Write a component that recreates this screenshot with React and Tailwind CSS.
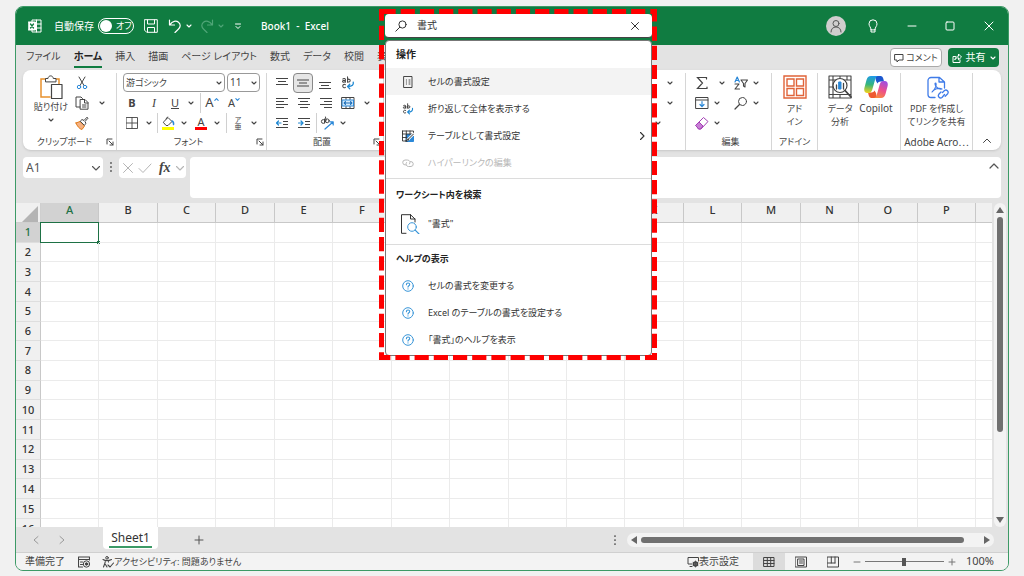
/**
 * Excel window with the search box open
 * -------------------------------------------------
 * - Title bar, ribbon, formula bar, sheet and status bar
 * - Search results for 書式, framed by a red dashed marker
 */

const columns = ["A", "B", "C", "D", "E", "F", "G", "H", "I", "J", "K", "L", "M", "N", "O", "P"];
const rows = Array.from({ length: 15 }, (_, i) => i + 1);
const tabs = ["ファイル", "ホーム", "挿入", "描画", "ページ レイアウト", "数式", "データ", "校閲", "表示"];

/* ---------- Small shared pieces ---------- */

function Icon({ className = "size-4", box = 16, children }) {
  return (
    <svg
      className={`shrink-0 ${className}`}
      viewBox={`0 0 ${box} ${box}`}
      fill="none"
      stroke="currentColor"
      strokeLinecap="round"
      strokeLinejoin="round"
      aria-hidden="true"
    >
      {children}
    </svg>
  );
}

function Chevron({ className = "size-[6px]" }) {
  return (
    <Icon box={6} className={className}>
      <path d="M1 2l2 2 2-2" strokeWidth="1.1" />
    </Icon>
  );
}

// Larger, thin chevron of the formula bar
function BarChevron() {
  return (
    <Icon box={10} className="size-2.5">
      <path d="M1.500 3.500L5 7l3.500-3.500" strokeWidth="1.100" />
    </Icon>
  );
}

function Cell({ label, className = "w-[22px]", children }) {
  return (
    <button type="button" aria-label={label} className={`flex h-5 shrink-0 items-center justify-center ${className}`}>
      {children}
    </button>
  );
}

function More({ className = "w-3" }) {
  return (
    <Cell label="その他" className={className}>
      <Chevron />
    </Cell>
  );
}

function Bar({ className = "w-1.5" }) {
  return (
    <span className={`flex h-5 shrink-0 justify-center ${className}`}>
      <span className="w-px bg-[#d0d0d0]" />
    </span>
  );
}

function Group({ label, className, launcher, children }) {
  return (
    <section className={`flex shrink-0 flex-col border-r border-[#d6d6d6] ${className}`}>
      <div className="h-[60px]">{children}</div>
      <div className="flex h-[17px] items-center">
        <h2 className="flex-1 text-center text-[9px] whitespace-nowrap">{label}</h2>
        {launcher && (
          <button type="button" aria-label="詳細" className="mr-0.5">
            <Icon box={8} className="size-2">
              <path d="M1 6V1h5M3 3l4 4M7 4v3H4" />
            </Icon>
          </button>
        )}
      </div>
    </section>
  );
}

function Combo({ label, value, className }) {
  return (
    <div className={`flex h-[19px] items-center rounded border border-[#999] pr-0.5 pl-0.5 ${className}`}>
      <select aria-label={label} defaultValue={value} className="min-w-0 flex-1 appearance-none bg-transparent outline-none">
        <option>{value}</option>
      </select>
      <Chevron />
    </div>
  );
}

/* ---------- Icons used more than once ---------- */

function WrapIcon({ className = "size-3.5" }) {
  return (
    <Icon className={className}>
      <path d="M2 3.500c1-1 3-.6 3 .6V7M5 5c-2 0-3.200.3-3.200 1.300S4 7.400 5 6M7.500 1v6M7.500 4.500c.6-1.300 3-1.300 3 .6S8 7.500 7.500 6.200M5 10c-1.200-1-3-.3-3 1.500s1.800 2.500 3 1.500" strokeWidth="1.200" />
      <path d="M14 7c.6 3-1 5-6 5M10 9.500L7.500 12l2.500 2.500" stroke="#1e88d2" strokeWidth="1.500" />
    </Icon>
  );
}

function HelpIcon() {
  return (
    <Icon className="size-3" box={12}>
      <circle cx="6" cy="6" r="5.300" stroke="#3a96d8" />
      <path d="M4.400 4.700c0-2.200 3.300-2.100 3.300-.2C7.700 5.800 6 5.700 6 7.100M6 8.800v.1" stroke="#3a96d8" strokeWidth="1.100" />
    </Icon>
  );
}

function Lines({ d }) {
  return (
    <Icon className="size-3.5" box={14}>
      <path d={d} strokeLinecap="butt" />
    </Icon>
  );
}

function IndentIcon({ arrow }) {
  return (
    <Icon className="size-3.5" box={14}>
      <path d="M1 2.500h12M8 5.500h5M8 8.500h5M1 11.500h12" strokeLinecap="butt" />
      <path d={arrow} stroke="#1e88d2" strokeWidth="1.200" />
    </Icon>
  );
}

/* ---------- Search box and its results ---------- */

const actions = [
  {
    text: "セルの書式設定",
    active: true,
    icon: (
      <Icon className="size-3" box={12}>
        <path d="M2 .5h8v11H2z" strokeWidth=".9" />
        <path d="M4.300 4h.3M7 4h1M4.300 6h.3M7 6h1M4.300 8h.3M7 8h1" strokeWidth=".9" />
      </Icon>
    ),
  },
  { text: "折り返して全体を表示する", icon: <WrapIcon className="size-3" /> },
  {
    text: "テーブルとして書式設定",
    sub: true,
    icon: (
      <Icon className="size-3" box={12}>
        <path d="M4.500 4.500h7v7h-7z" fill="#2b88d8" stroke="#2b88d8" />
        <path d="M.5 1h11v3H.500zM.500 1v10h3M.500 7.500h4M4.300 1v10M8 1v3" strokeWidth=".9" />
        <path d="M11.500 4L6 9.500" stroke="#fff" strokeWidth="2.500" />
        <path d="M11.500 4L6.500 9M6 9c-1.500 0-1 2-2.500 2 1.500.6 3 .3 3-1.500" />
      </Icon>
    ),
  },
  {
    text: "ハイパーリンクの編集",
    disabled: true,
    icon: (
      <Icon className="size-3" box={12}>
        <path d="M3.500 8A2.500 2.500 0 013 3h2.500a2.500 2.500 0 012 4M8.500 4.500a2.500 2.500 0 01.5 5H6.500a2.500 2.500 0 01-2-4" />
      </Icon>
    ),
  },
];

const helps = ["セルの書式を変更する", "Excel のテーブルの書式を設定する", "「書式」のヘルプを表示"];

function SearchBox() {
  return (
    <div className="relative z-10 min-w-0 flex-1">
      <div className="flex h-6 items-center rounded-sm border-b border-[#444] bg-white pr-3 pl-2.5 text-[#333]">
        <Icon className="size-3" box={12}>
          <circle cx="7.500" cy="4.500" r="3.600" />
          <path d="M4.800 7.200L.8 11.200" />
        </Icon>
        <input
          type="text"
          aria-label="検索"
          defaultValue="書式"
          className="min-w-0 flex-1 bg-transparent pl-2.5 text-[10px] outline-none"
        />
        <button type="button" aria-label="クリア">
          <Icon className="size-2.5" box={10}>
            <path d="M1.500 1.500l7 7M8.500 1.500l-7 7" />
          </Icon>
        </button>
      </div>

      <div className="absolute inset-x-0 top-full mt-0.5 rounded-sm border border-[#777] bg-white pb-0.5 text-[9px] text-[#333]">
        <section className="border-b border-[#dcdcdc] pb-0.5">
          <h2 className="flex h-[27px] items-center pl-2.5 text-[10px] font-bold text-[#222]">操作</h2>
          {actions.map((a) => (
            <button
              key={a.text}
              type="button"
              disabled={a.disabled}
              className={`flex h-[27px] w-full items-center pr-1 ${a.active ? "bg-[#f3f3f3]" : ""} ${a.disabled ? "text-[#b8b8b8]" : ""}`}
            >
              <span className="flex w-11 shrink-0 justify-center">{a.icon}</span>
              <span className="-ml-0.5 flex-1 text-left">{a.text}</span>
              {a.sub && (
                <Icon className="size-2.5" box={10}>
                  <path d="M3.500 1.500L7 5 3.500 8.500" strokeWidth="1.100" />
                </Icon>
              )}
            </button>
          ))}
        </section>

        <section className="border-b border-[#dcdcdc] pt-0.5 pb-1">
          <h2 className="flex h-[27px] items-center pl-2.5 font-bold text-[#222]">ワークシート内を検索</h2>
          <button type="button" className="flex h-8 w-full items-center">
            <span className="flex w-12 shrink-0 justify-center">
              <Icon className="size-5" box={20}>
                <path d="M6 19.300H1.500V.7h9L15 5v3M10.500.7V5H15" strokeLinejoin="miter" />
                <circle cx="12" cy="13" r="4.300" stroke="#3a96d8" />
                <path d="M15.200 16.200L19 20" stroke="#3a96d8" strokeWidth="1.200" />
              </Icon>
            </span>
            <span className="-ml-1.5">"書式"</span>
          </button>
        </section>

        <section>
          <h2 className="flex h-[27px] items-center pl-2.5 font-bold text-[#222]">ヘルプの表示</h2>
          {helps.map((h) => (
            <button key={h} type="button" className="flex h-[27px] w-full items-center">
              <span className="flex w-11 shrink-0 justify-center">
                <HelpIcon />
              </span>
              <span className="-ml-0.5">{h}</span>
            </button>
          ))}
        </section>
      </div>

      {/* Red marker around the box and its results */}
      <svg
        className="pointer-events-none absolute -top-[5px] -left-[6px] h-[351px] w-[calc(100%+11px)] overflow-visible"
        aria-hidden="true"
      >
        <rect x="2.500" y="2.500" width="98.200%" height="98.600%" fill="none" stroke="#fe0000" strokeWidth="5" strokeDasharray="14.200 5" />
      </svg>
    </div>
  );
}

/* ---------- Title bar ---------- */

function TitleBar() {
  return (
    <header className="flex h-[38px] shrink-0 items-center bg-[#107c41] text-white">
      <div className="flex w-[369px] shrink-0 items-center pl-3">
        <Icon className="size-3.5" box={14}>
          <path d="M4 3V1h9v12H4v-2M8.500 1v12M8.500 5H13M8.500 9H13" />
          <path d="M.5 3h7v8h-7z" fill="#fff" />
          <path d="M2.500 5l3 4M5.500 5l-3 4" stroke="#107c41" strokeWidth="1.300" />
        </Icon>
        <label className="ml-3 flex items-center text-[10px]">
          <span className="w-11">自動保存</span>
          <input type="checkbox" className="peer sr-only" />
          <span className="flex h-4 w-9 items-center gap-1 rounded-full border border-white pl-px text-[9px]">
            <span className="size-3 rounded-full bg-white" />
            オフ
          </span>
        </label>
        <button type="button" aria-label="保存" className="ml-2.5">
          <Icon className="size-3.5" box={14}>
            <path d="M.7.7h12.600v12.600H2.700l-2-2zM3.500 1v4h7V1M3.500 13V8.500h7V13" strokeLinejoin="miter" />
          </Icon>
        </button>
        <button type="button" aria-label="元に戻す" className="ml-2.5">
          <Icon className="size-3.5" box={14}>
            <path d="M1.500 1v5h5M1.800 5.800C4.500 2 8 1.200 10.500 3.300s2 5-.2 7L7 13.500" strokeWidth="1.200" />
          </Icon>
        </button>
        <Chevron className="ml-1 size-[6px]" />
        <button type="button" aria-label="やり直し" disabled className="ml-2 text-[#4fa577]">
          <Icon className="size-3.5" box={14}>
            <path d="M12.500 1v5h-5M12.200 5.800C9.500 2 6 1.200 3.500 3.300s-2 5 .2 7L7 13.500" strokeWidth="1.200" />
          </Icon>
        </button>
        <Chevron className="ml-1 size-[6px] text-[#4fa577]" />
        <Icon className="ml-2.5 size-2" box={8}>
          <path d="M1.500 2h5M2 4.500l2 2 2-2" />
        </Icon>
        <h1 className="ml-[19px] text-[10px] font-medium whitespace-pre">Book1  -  Excel</h1>
      </div>

      <SearchBox />

      <div className="flex w-[356px] shrink-0 items-center justify-end">
        <button type="button" aria-label="アカウント" className="flex size-5 items-center justify-center rounded-full bg-[#d0cece] text-[#555]">
          <Icon className="size-3.5" box={14}>
            <circle cx="7" cy="4.500" r="3" />
            <path d="M2 13c0-3 2-5 5-5s5 2 5 5" />
          </Icon>
        </button>
        <button type="button" aria-label="ヒント" className="flex w-[54px] justify-center">
          <Icon className="size-3.5" box={14}>
            <path d="M5 10.500C5 8 3 7.500 3 4.800a4 4 0 018 0C11 7.500 9 8 9 10.500zM5 10.500v2.500h4v-2.500" />
          </Icon>
        </button>
        <button type="button" aria-label="最小化" className="flex w-6 justify-center">
          <Icon className="size-2.5" box={10}>
            <path d="M1 5h8" />
          </Icon>
        </button>
        <button type="button" aria-label="最大化" className="flex w-[52px] justify-center">
          <Icon className="size-2.5" box={10}>
            <rect x="1" y="1" width="8" height="8" rx="1" />
          </Icon>
        </button>
        <button type="button" aria-label="閉じる" className="mr-1.5 flex w-[26px] justify-center">
          <Icon className="size-2.5" box={10}>
            <path d="M1 1l8 8M9 1L1 9" />
          </Icon>
        </button>
      </div>
    </header>
  );
}

function TabRow() {
  return (
    <nav className="flex h-[25px] shrink-0 items-center justify-between pr-[9px] pl-2.5">
      <div className="flex gap-[13px] text-[10px]">
        {tabs.map((t) => (
          <button
            key={t}
            type="button"
            className={`h-5 border-b-2 whitespace-nowrap ${t === "ホーム" ? "border-[#107c41] font-bold text-[#222]" : "border-transparent"}`}
          >
            {t}
          </button>
        ))}
      </div>
      <div className="flex gap-1.5 text-[10px]">
        <button type="button" className="flex h-[19px] w-[52px] items-center justify-center gap-0.5 rounded border border-[#aaa] bg-white text-[9px] whitespace-nowrap">
          <Icon className="size-2.5" box={10}>
            <path d="M1 1.500h8v5.500H5L3 9V7H1z" />
          </Icon>
          コメント
        </button>
        <button type="button" className="flex h-[19px] w-[51px] items-center justify-center gap-1 rounded bg-[#107c41] whitespace-nowrap text-white">
          <Icon className="size-2.5" box={10}>
            <path d="M3.500 3.500H1v6h7V7M3 6.500C3.500 4 5 3.200 6.500 3.200V1L9.500 4 6.500 6.800V4.800C5 4.800 4 5.200 3 6.500z" />
          </Icon>
          共有
          <Chevron />
        </button>
      </div>
    </nav>
  );
}

/* ---------- Ribbon ---------- */

function Ribbon() {
  return (
    <div className="mr-[7px] ml-[7px] flex h-20 shrink-0 rounded-lg bg-white pt-[3px] text-[#444] shadow-sm">
      <Group label="クリップボード" launcher className="w-[94px]">
        <div className="flex">
          <button type="button" className="ml-2 flex w-10 flex-col items-center pt-0.5 text-[9px] leading-4 whitespace-nowrap">
            <Icon className="size-6" box={24}>
              <path d="M8 4H2v18h9M15 4h5v5" stroke="#e8912d" strokeWidth="1.500" strokeLinejoin="miter" />
              <path d="M6.500 6.500v-3H9c.3-3.500 5-3.500 5.300 0H17v3z" fill="#fff" />
              <path d="M12.500 9.500h10.500v14H12.500z" fill="#fff" strokeWidth="1.200" />
            </Icon>
            貼り付け
            <Chevron className="mt-0.5 size-[6px]" />
          </button>
          <div className="flex flex-col">
            <Cell label="切り取り">
              <Icon className="size-3.5" box={14}>
                <path d="M4 1l5 8.500M10 1L5 9.500" />
                <circle cx="4" cy="11" r="1.700" stroke="#2b88d8" />
                <circle cx="10" cy="11" r="1.700" stroke="#2b88d8" />
              </Icon>
            </Cell>
            <div className="flex">
              <Cell label="コピー">
                <Icon className="size-3.5" box={14}>
                  <path d="M5 11H1V1h5l1.500 1.500M5.500 3.500h4.500L13 6.500v6.700H5.500zM9.500 3.500v3.500H13M7.500 9h3.500M7.500 11h3.500" />
                </Icon>
              </Cell>
              <More className="w-[18px]" />
            </div>
            <Cell label="書式のコピー">
              <Icon className="size-3.5" box={14}>
                <path d="M1 7l4-1.500L9.500 10 7 13.500C4.500 13 2 10 1 7z" fill="#f4b183" stroke="#e07b1a" />
                <path d="M5.500 5L7 3.500l2 1L12 1.200l1 1L10 5.500l1 2L9.500 9z" fill="#fff" />
              </Icon>
            </Cell>
          </div>
        </div>
      </Group>

      <Group label="フォント" launcher className="w-[150px] pl-1">
        <div className="flex h-5 gap-0.5 pl-0.5">
          <Combo label="フォント名" value="游ゴシック" className="w-[102px] text-[9px]" />
          <Combo label="フォント サイズ" value="11" className="w-[33px] text-[10px]" />
        </div>
        <div className="flex text-[11px]">
          <Cell label="太字"><b>B</b></Cell>
          <Cell label="斜体"><i className="font-['Liberation_Serif',serif] text-[12px]">I</i></Cell>
          <Cell label="下線" className="w-5"><u>U</u></Cell>
          <More />
          <Bar />
          <Cell label="フォント サイズの拡大" className="w-[18px] text-[13px]">
            A<Icon box={6} className="mb-2 size-[5px]"><path d="M1 4l2-2 2 2" stroke="#2b88d8" strokeWidth="1.300" /></Icon>
          </Cell>
          <Cell label="フォント サイズの縮小" className="w-[26px] text-[11px]">
            A<Icon box={6} className="mb-2 size-[5px]"><path d="M1 2l2 2 2-2" stroke="#2b88d8" strokeWidth="1.300" /></Icon>
          </Cell>
        </div>
        <div className="flex">
          <Cell label="罫線">
            <Icon className="size-3" box={12}>
              <path d="M.5.500h11v11H.500zM6 .5v11M.5 6h11" strokeWidth=".9" />
            </Icon>
          </Cell>
          <More />
          <Bar className="w-1" />
          <Cell label="塗りつぶし" className="w-[18px]">
            <Icon className="size-3.5" box={14}>
              <path d="M2.500 6L7 1.500l4 4-4 4H5.500zM5 3l1.500-2" />
              <path d="M11 5c1.500.8 1.800 2 1.500 3.500" stroke="#2b88d8" strokeWidth="1.500" />
              <path d="M1 12.500h12" stroke="#ffff00" strokeWidth="3" strokeLinecap="butt" />
            </Icon>
          </Cell>
          <More className="w-3.5" />
          <Cell label="フォントの色" className="w-5">
            <span className="flex h-3.5 items-center border-b-3 border-[#f00] px-0.5 text-[11px] leading-3">A</span>
          </Cell>
          <More />
          <Bar />
          <Cell label="ふりがな" className="w-[18px] flex-col text-[7px] leading-[7px]">
            <span>ア</span>
            <span>亜</span>
          </Cell>
          <More className="w-3.5" />
        </div>
      </Group>

      <Group label="配置" launcher className="w-[117px] pl-1">
        <div className="flex">
          <Cell label="上揃え"><Lines d="M1 2.500h12M3 5.500h8M1 8.500h12" /></Cell>
          <Cell label="上下中央揃え" className="w-5 rounded border border-[#888] bg-[#e6e6e6]">
            <Lines d="M1 4h12M3 7h8M1 10h12" />
          </Cell>
          <Cell label="下揃え" className="w-6"><Lines d="M1 6.500h12M3 9.500h8M1 12.500h12" /></Cell>
          <Cell label="折り返し"><WrapIcon /></Cell>
        </div>
        <div className="flex">
          <Cell label="左揃え"><Lines d="M1 2.500h12M1 5.500h8M1 8.500h12M1 11.500h8" /></Cell>
          <Cell label="中央揃え"><Lines d="M1 2.500h12M3 5.500h8M1 8.500h12M3 11.500h8" /></Cell>
          <Cell label="右揃え"><Lines d="M1 2.500h12M5 5.500h8M1 8.500h12M5 11.500h8" /></Cell>
          <Cell label="セルを結合">
            <Icon className="size-3.5" box={14}>
              <path d="M1 1.500h12v11H1zM5 1.500v2M9 1.500v2M5 10.500v2M9 10.500v2" />
              <path d="M1.500 4h11v6h-11z" fill="#d5eafa" stroke="#2b88d8" />
              <path d="M3.500 7h7M4.500 5.700L3.200 7l1.300 1.300M9.500 5.700L10.800 7 9.500 8.300" stroke="#1e6fb8" strokeWidth="1.200" />
            </Icon>
          </Cell>
          <More className="w-4" />
        </div>
        <div className="flex">
          <Cell label="インデント解除"><IndentIcon arrow="M6 7H1.500M3.500 5l-2 2 2 2" /></Cell>
          <Cell label="インデント"><IndentIcon arrow="M1.500 7H6M4 5l2 2-2 2" /></Cell>
          <Bar className="w-0.5" />
          <Cell label="方向" className="w-5">
            <Icon className="size-3.5" box={14}>
              <circle cx="3.300" cy="5.500" r="1.900" />
              <circle cx="7.300" cy="4.800" r="1.900" />
              <path d="M4.500 3v4M5.500 1l.5 3.500" />
              <path d="M5 13l8-7M13.200 9V5.800H10" stroke="#2b88d8" strokeWidth="1.200" />
            </Icon>
          </Cell>
          <More />
        </div>
      </Group>

      {/* Number, styles and cells sit behind the search results */}
      <section className="flex min-w-0 flex-1 flex-col items-end border-r border-[#d6d6d6] pr-2">
        <More className="w-3.5" />
        <More className="w-3.5" />
        <More className="mr-3 w-3.5" />
      </section>

      <Group label="編集" className="w-[86px] pl-1">
        <div className="flex">
          <Cell label="合計" className="w-6">
            <Icon className="size-3.5" box={14}>
              <path d="M11.500 3V1.500h-9L7.500 7l-5 5.500h9.500V11" strokeWidth="1.200" strokeLinejoin="miter" />
            </Icon>
          </Cell>
          <More className="w-4" />
          <Cell label="並べ替え">
            <Icon className="size-3.5" box={14}>
              <path d="M1 6l2.200-5 2.200 5M1.800 4.500h2.800" stroke="#2b88d8" strokeWidth="1.200" />
              <path d="M1 8h4l-4 5h4.500M7 4h6.500L11 7.500V11l-1.500-1V7.500z" strokeWidth="1.100" />
            </Icon>
          </Cell>
          <More className="w-2" />
        </div>
        <div className="flex">
          <Cell label="フィル" className="w-6">
            <Icon className="size-3.5" box={14}>
              <path d="M1 1.500h12v11H1zM1 4h12" />
              <path d="M7 5.500v5M5 8.500l2 2.200 2-2.200" stroke="#2b88d8" strokeWidth="1.200" />
            </Icon>
          </Cell>
          <More className="mr-2.5 w-1.5" />
          <Cell label="検索と選択">
            <Icon className="size-3.5" box={14}>
              <circle cx="8.500" cy="5.500" r="4" />
              <path d="M5.500 8.500L1 13" strokeWidth="1.200" />
            </Icon>
          </Cell>
          <More className="w-2" />
        </div>
        <div className="flex">
          <Cell label="クリア" className="w-6">
            <Icon className="size-3.5" box={14}>
              <path d="M1 9l7.500-7.500L13 5.500 6 13H4z" stroke="#a33fb5" />
              <path d="M1 9l3-3 4 4-2.500 3H4z" fill="#c77fd4" stroke="#a33fb5" />
            </Icon>
          </Cell>
          <More className="w-1.5" />
        </div>
      </Group>

      <Group label="アドイン" className="w-[46px]">
        <button type="button" className="flex w-full flex-col items-center gap-[3px] pt-0.5 text-[9px] leading-[13px]">
          <Icon className="size-6" box={24}>
            <path d="M1 1h22v22H1zM4 4h7v7H4zM13.500 4h7v7h-7zM4 13.500h7v7H4zM13.500 13.500h7v7h-7z" stroke="#e06339" strokeWidth="1.400" strokeLinejoin="miter" />
          </Icon>
          <span>アド<br />イン</span>
        </button>
      </Group>

      <Group label="" className="w-[83px] pl-1">
        <div className="flex text-[10px] leading-[13px]">
          <button type="button" className="flex w-9 flex-col items-center gap-[3px] pt-0.5 text-[9px]">
            <Icon className="size-6" box={24}>
              <path d="M1 1h22v22H1zM1 5h22M1 19.500h22M1 12h4M5 1v4M12 1v3M19 1v4M5 5v14M5 19.500V23M12 19.500V23" strokeWidth="1.100" />
              <circle cx="12" cy="10.500" r="7" fill="#fff" strokeWidth="1.200" />
              <path d="M17 15.500l6 6.500" strokeWidth="1.800" />
              <path d="M8.500 10v4M15.500 8.500V14" strokeWidth="1.300" />
              <path d="M11 7h2v7h-2z" fill="#2b88d8" stroke="#2b88d8" />
            </Icon>
            <span>データ<br />分析</span>
          </button>
          <button type="button" className="flex w-9 flex-col items-center gap-[3px] pt-0.5">
            <svg className="size-6" viewBox="0 0 24 24" aria-hidden="true">
              <defs>
                <linearGradient id="cpLeft" x1=".4" y1="0" x2=".3" y2="1">
                  <stop offset="0" stopColor="#1f9be8" />
                  <stop offset=".5" stopColor="#35b57c" />
                  <stop offset="1" stopColor="#f2d21b" />
                </linearGradient>
                <linearGradient id="cpRight" x1=".7" y1="0" x2=".3" y2="1">
                  <stop offset="0" stopColor="#a04fe0" />
                  <stop offset=".5" stopColor="#ec4f8d" />
                  <stop offset="1" stopColor="#f98a3c" />
                </linearGradient>
              </defs>
              <path d="M11 1h5.500c1.600 0 2.400 1.300 2.900 3l.6 2.500h-3.500c-1.500 0-2.500.7-3 2L12 6z" fill="#1c58cf" />
              <path d="M13 23H7.500c-1.600 0-2.400-1.300-2.900-3L4 17.500h3.500c1.500 0 2.500-.7 3-2L12 18z" fill="#ee5a30" />
              <path d="M7 1h7.500c-2 0-2.800 1.500-3.500 4L8.300 14.500c-.8 2.500-1.800 3.500-3.800 3.500H3.300C.5 18-.3 15.500.5 12.500L2.500 5C3.300 2.200 4.500 1 7 1z" fill="url(#cpLeft)" />
              <path d="M17 23H9.500c2 0 2.800-1.500 3.500-4l2.700-9.500c.8-2.500 1.800-3.500 3.800-3.500h1.200c2.800 0 3.600 2.500 2.800 5.500l-2 7.500c-.8 2.800-2 4-4.500 4z" fill="url(#cpRight)" />
            </svg>
            <span>Copilot</span>
          </button>
        </div>
      </Group>

      <Group
        label={
          <span className="text-[10px]">
            Adobe Acro<span className="font-['Noto_Sans_CJK_JP',sans-serif]">…</span>
          </span>
        }
        className="w-[72px]"
      >
        <button type="button" className="flex w-full flex-col items-center gap-[3px] pt-0.5 text-[9px] leading-[13px] whitespace-nowrap">
          <Icon className="size-6" box={24}>
            <g stroke="#3f7be8" strokeWidth="1.300">
              <path d="M10 22.500H6a3 3 0 01-3-3v-14a3 3 0 013-3h8.500L19.500 7v6M14 2.500V7h5" />
              <path d="M7 17c4-3 5-9 3.500-9S11 15 17 14c-3-1.500-8 0-10 3z" strokeWidth="1.100" />
              <path d="M17.500 17.500l2-2a2.300 2.300 0 013.200 3.200l-2.500 2.500M19.500 19.500l-2.500 3a2.300 2.300 0 01-3.200-3.200L16 17" />
            </g>
          </Icon>
          <span>PDF を作成し<br />てリンクを共有</span>
        </button>
      </Group>

      <button type="button" aria-label="リボンを折りたたむ" className="flex w-7 shrink-0 items-end justify-center pb-1">
        <Icon className="size-2.5" box={10}>
          <path d="M1.500 6.500L5 3l3.500 3.500" />
        </Icon>
      </button>
    </div>
  );
}

/* ---------- Formula bar ---------- */

function FormulaBar() {
  return (
    <div className="flex h-[53px] shrink-0 items-start px-[7px] pt-[7px] text-[#555]">
      <div className="flex h-[21px] w-20 items-center rounded-sm bg-white pr-0.5 pl-[3px]">
        <input aria-label="名前ボックス" defaultValue="A1" className="w-0 flex-1 bg-transparent text-[12px] outline-none" />
        <BarChevron />
      </div>
      <Icon className="mx-0.5 mt-1 size-3" box={12}>
        <path d="M6 2v.1M6 6v.1M6 10v.1" strokeWidth="1.800" />
      </Icon>
      <div className="flex h-[21px] w-[67px] items-center justify-between rounded-sm bg-white pr-px pl-[3px] text-[#b5b5b5]">
        <button type="button" aria-label="キャンセル">
          <Icon className="size-3" box={12}><path d="M1.500 1.500l9 9M10.500 1.500l-9 9" /></Icon>
        </button>
        <button type="button" aria-label="入力">
          <Icon className="size-3.5" box={14}><path d="M1 7.500l4 4L13 3" /></Icon>
        </button>
        <button type="button" aria-label="関数の挿入" className="pl-0.5 font-['Liberation_Serif',serif] text-[14px] leading-4 font-bold text-[#444] italic">
          fx
        </button>
        <BarChevron />
      </div>
      <div className="ml-1 flex h-[41px] flex-1 items-start rounded-sm bg-white pt-1 pr-0.5">
        <textarea aria-label="数式バー" className="h-full flex-1 resize-none bg-transparent outline-none" />
        <Icon className="size-2.5" box={10}>
          <path d="M1 7l4-4 4 4" strokeWidth="1.200" />
        </Icon>
      </div>
    </div>
  );
}

/* ---------- Sheet ---------- */

function Sheet() {
  return (
    <div className="flex min-h-0 flex-1">
      <div className="min-w-0 flex-1 overflow-hidden bg-white">
        <table className="h-full w-full table-fixed border-separate border-spacing-0 text-[11px] leading-3 text-[#333]">
          <colgroup>
            <col className="w-[25px]" />
            {columns.map((c) => (
              <col key={c} />
            ))}
            <col className="w-4" />
          </colgroup>
          <thead>
            <tr className="h-5">
              <th className="border-r border-b border-[#cfcfcf] bg-[#f0f0f0] p-0">
                <svg className="mt-0.5 ml-1.5 size-4" viewBox="0 0 16 16" aria-hidden="true">
                  <path d="M16 0v16H0z" fill="#b4b4b4" />
                </svg>
              </th>
              {columns.map((c) => (
                <th
                  key={c}
                  scope="col"
                  className={`border-r border-b border-[#c8c8c8] p-0 pb-1.5 font-medium ${c === "A" ? "bg-[#d2d2d2] text-[#1e7145]" : "bg-[#f0f0f0]"}`}
                >
                  {c}
                </th>
              ))}
              <th className="border-b border-[#c8c8c8] bg-[#f0f0f0] p-0" />
            </tr>
          </thead>
          <tbody>
            {rows.map((r) => (
              <tr key={r}>
                <th
                  scope="row"
                  className={`border-r border-b border-r-[#c8c8c8] border-b-[#dedede] p-0 font-medium ${r === 1 ? "bg-[#d2d2d2] text-[#1e7145]" : "bg-[#f0f0f0]"}`}
                >
                  {r}
                </th>
                {columns.map((c) => (
                  <td key={c} className="relative border-r border-b border-[#ebebeb] p-0">
                    {r === 1 && c === "A" && (
                      <div className="absolute -inset-px border border-[#1e7145]">
                        <span className="absolute -right-0.5 -bottom-0.5 size-[3px] bg-[#1e7145]" />
                      </div>
                    )}
                  </td>
                ))}
                <td className="border-b border-[#ebebeb] p-0" />
              </tr>
            ))}
            <tr className="h-2">
              <th scope="row" className="border-r border-[#c8c8c8] bg-[#f0f0f0] p-0 font-medium">
                <div className="h-2 overflow-hidden pt-1">16</div>
              </th>
              {columns.map((c) => (
                <td key={c} className="border-r border-[#ebebeb] p-0" />
              ))}
              <td className="p-0" />
            </tr>
          </tbody>
        </table>
      </div>
      <div className="flex w-4 flex-col items-center text-[#666]">
        <div className="flex w-3 flex-1 flex-col items-center rounded-full bg-[#f3f3f3] py-1">
          <svg className="h-1.5 w-2" viewBox="0 0 8 6" aria-hidden="true"><path d="M4 0l4 6H0z" fill="currentColor" /></svg>
          <div className="mt-1 w-1.5 flex-[71] rounded-full bg-[#707070]" />
          <div className="flex-[28]" />
          <svg className="h-1.5 w-2" viewBox="0 0 8 6" aria-hidden="true"><path d="M4 6l4-6H0z" fill="currentColor" /></svg>
        </div>
      </div>
    </div>
  );
}

function SheetTabs() {
  return (
    <div className="flex h-[25px] shrink-0 items-center text-[#999]">
      <button type="button" aria-label="前のシート" className="ml-[15px]">
        <Icon className="size-2.5" box={10}><path d="M7 1.500L3 5l4 3.500" /></Icon>
      </button>
      <button type="button" aria-label="次のシート" className="ml-4">
        <Icon className="size-2.5" box={10}><path d="M3 1.500L7 5 3 8.500" /></Icon>
      </button>
      <button type="button" className="ml-9 h-[22px] w-[55px] self-start rounded-b bg-white text-[12px] leading-4 text-[#333]">
        <span className="border-b-2 border-[#3c9a66] px-0.5">Sheet1</span>
      </button>
      <button type="button" aria-label="新しいシート" className="ml-9 text-[#555]">
        <Icon className="size-2.5" box={10}><path d="M5 1v8M1 5h8" /></Icon>
      </button>
      <Icon className="mr-1.5 ml-auto size-3 text-[#444]" box={12}>
        <path d="M6 2v.1M6 6v.1M6 10v.1" strokeWidth="1.700" />
      </Icon>
      <div className="mr-3.5 flex h-3.5 w-[367px] items-center rounded-full bg-[#f3f3f3] px-1 text-[#666]">
        <svg className="h-2 w-1.5" viewBox="0 0 6 8" aria-hidden="true"><path d="M0 4l6-4v8z" fill="currentColor" /></svg>
        <div className="ml-1 h-1.5 w-[323px] rounded-full bg-[#707070]" />
        <svg className="ml-auto h-2 w-1.5" viewBox="0 0 6 8" aria-hidden="true"><path d="M6 4L0 0v8z" fill="currentColor" /></svg>
      </div>
    </div>
  );
}

/* ---------- Status bar ---------- */

function StatusBar() {
  return (
    <footer className="flex h-[18px] shrink-0 items-center border-t border-[#d0d0d0] bg-[#f3f3f3] pr-3.5 pl-[9px] text-[10px] whitespace-nowrap">
      <span className="w-[53px]">準備完了</span>
      <Icon className="size-3" box={12}>
        <path d="M.5 1h11M.5 1v10h4M11.500 1v3M.5 3.500h11M2.500 6h2M2.500 8.500h2" strokeWidth="1.100" />
        <circle cx="8.500" cy="8" r="3.200" />
        <circle cx="8.500" cy="8" r="1.200" fill="currentColor" />
      </Icon>
      <Icon className="ml-3 size-3" box={12}>
        <circle cx="5" cy="1.800" r="1.300" />
        <path d="M1 3.500c2.500 1.500 5.500 1.500 8.500 0M3.500 4.500L3 7l-1.500 4M3.500 8.500L5 11M6.500 4.500V6M6 9l2 2 3.500-4" strokeWidth="1.100" />
      </Icon>
      <span className="text-[9px]">アクセシビリティ: 問題ありません</span>
      <button type="button" className="ml-auto flex items-center">
        <Icon className="size-3" box={12}>
          <path d="M5 8H1V1.500h10.500V5M3 10.500h2" />
          <circle cx="8.500" cy="8" r="2" strokeWidth="1.500" />
          <path d="M8.500 5v6M6 6.500l5 3M6 9.500l5-3" strokeWidth=".8" />
        </Icon>
        表示設定
      </button>
      <div className="ml-3.5 flex h-full">
        <button type="button" aria-label="標準" className="flex w-8 items-center justify-center bg-[#dcdcdc]">
          <Icon className="size-3" box={12}><path d="M1 1.500h10v9H1zM4.300 1.500v9M7.700 1.500v9M1 4.500h10M1 7.500h10" /></Icon>
        </button>
        <button type="button" aria-label="ページ レイアウト" className="flex w-8 items-center justify-center">
          <Icon className="size-3" box={12}><path d="M.5 1h11v10H.500zM3 3h6v6.500H3zM4.500 5h3M4.500 7h3" /></Icon>
        </button>
        <button type="button" aria-label="改ページ" className="flex w-8 items-center justify-center">
          <Icon className="size-3" box={12}><path d="M.5 1h11v10H.500zM4.300 1v6M8 1v6M.5 7H8" /></Icon>
        </button>
      </div>
      <button type="button" aria-label="縮小" className="ml-1 text-[#777]">
        <Icon className="size-2" box={8}><path d="M1 4h6" /></Icon>
      </button>
      <input
        type="range"
        aria-label="ズーム"
        min="0"
        max="100"
        defaultValue="50"
        className="mx-1 h-px w-[79px] appearance-none bg-[#777] [&::-webkit-slider-thumb]:h-2 [&::-webkit-slider-thumb]:w-1 [&::-webkit-slider-thumb]:appearance-none [&::-webkit-slider-thumb]:bg-[#555]"
      />
      <button type="button" aria-label="拡大" className="text-[#777]">
        <Icon className="size-2" box={8}><path d="M1 4h6M4 1v6" /></Icon>
      </button>
      <span className="ml-2.5 text-[11px]">100%</span>
    </footer>
  );
}

export default function App() {
  return (
    <div className="h-screen bg-[#f1f1f1] px-[15px] pt-1.5 pb-[5px] font-['Noto_Sans','Noto_Sans_CJK_JP',sans-serif] text-[#444] [font-feature-settings:'palt']">
      <main className="flex h-full flex-col overflow-hidden rounded-lg border border-[#3c9a66] bg-[#e3e3e3]">
        <TitleBar />
        <TabRow />
        <Ribbon />
        <FormulaBar />
        <Sheet />
        <SheetTabs />
        <StatusBar />
      </main>
    </div>
  );
}
